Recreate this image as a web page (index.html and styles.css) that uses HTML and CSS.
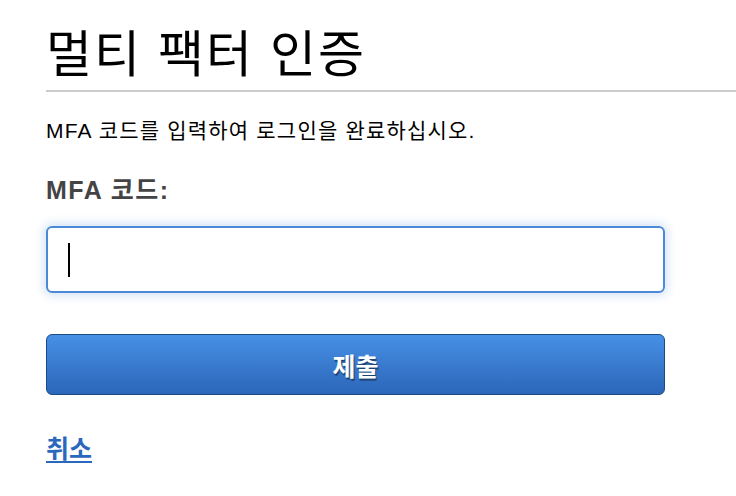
FILE: index.html
```html
<!DOCTYPE html>
<html lang="ko">
<head>
<meta charset="utf-8">
<title>멀티 팩터 인증</title>
<link rel="stylesheet" href="styles.css">
</head>
<body>
<main class="page">
  <h1 class="title">멀티 팩터 인증</h1>
  <p class="intro">MFA 코드를 입력하여 로그인을 완료하십시오.</p>
  <form class="form">
    <label class="label" for="code">MFA 코드:</label>
    <div class="field"><span class="caret"></span></div>
    <button type="button" class="submit">제출</button>
  </form>
  <a class="cancel" href="#">취소</a>
</main>
</body>
</html>
```

FILE: styles.css
```css
html, body {
  margin: 0;
  padding: 0;
  background: #fff;
}
body {
  font-family: "Liberation Sans", "Noto Sans CJK KR", sans-serif;
  color: #000;
}
.page {
  padding-left: 46px;
  padding-top: 18px;
}
.title {
  margin: 0;
  font-family: "Noto Sans CJK KR", sans-serif;
  font-weight: 400;
  font-size: 50px;
  line-height: 65px;
  padding-bottom: 7px;
  border-bottom: 2px solid #cccccc;
  letter-spacing: 2px;
}
.intro {
  margin: 25px 0 0;
  font-size: 21px;
  line-height: 28px;
  letter-spacing: 1.2px;
}
.form {
  display: flex;
  flex-direction: column;
  width: 619px;
}
.label {
  margin-top: 30px;
  font-weight: 700;
  font-size: 25px;
  line-height: 30px;
  letter-spacing: 1.5px;
  color: #444;
}
.field {
  margin-top: 21px;
  height: 67px;
  box-sizing: border-box;
  border: 2px solid #4a8ad8;
  border-radius: 6px;
  box-shadow: 0 0 10px 3px rgba(74, 138, 216, 0.22);
  display: flex;
  align-items: center;
  padding-left: 20px;
}
.caret {
  width: 2px;
  height: 34px;
  background: #000;
}
.submit {
  margin-top: 41px;
  height: 61px;
  border: 1px solid #1c4a88;
  border-radius: 6px;
  background: linear-gradient(#4690e6, #2c66b8);
  color: #fff;
  font-family: "Noto Sans CJK KR", sans-serif;
  font-weight: 700;
  font-size: 25px;
  text-shadow: 1px 2px 1px rgba(0, 0, 0, 0.45);
  padding: 0;
}
.cancel {
  display: inline-block;
  margin-top: 36px;
  font-family: "Noto Sans CJK KR", sans-serif;
  font-weight: 700;
  font-size: 25px;
  line-height: 32px;
  color: #2a68bd;
  text-decoration: underline;
  text-underline-offset: 3px;
}
```
